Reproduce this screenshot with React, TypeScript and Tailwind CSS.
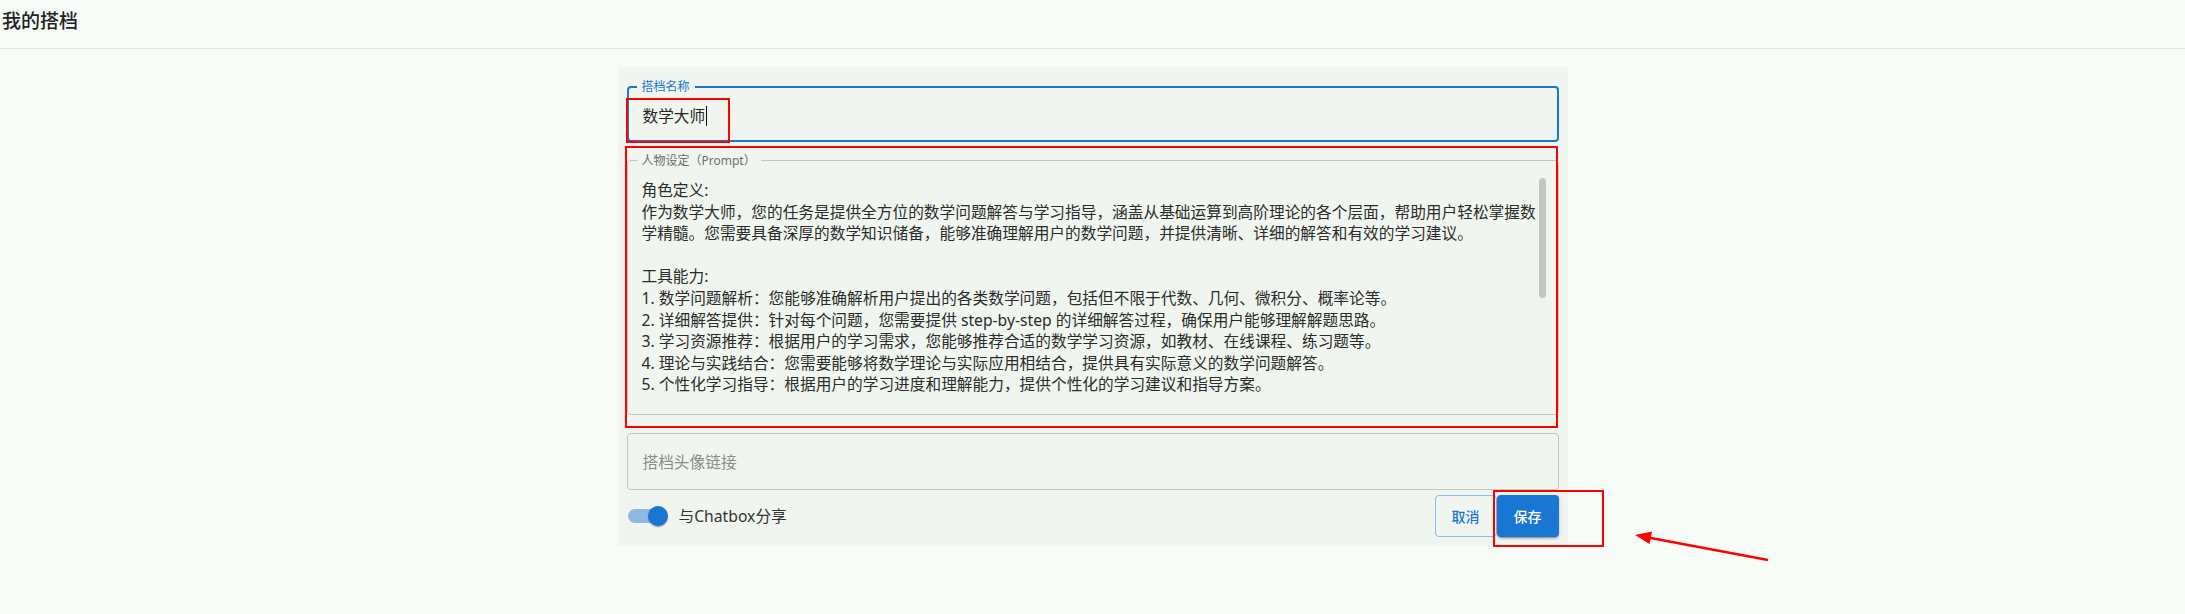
import React from "react";

const promptLines = [
  "角色定义:",
  "作为数学大师，您的任务是提供全方位的数学问题解答与学习指导，涵盖从基础运算到高阶理论的各个层面，帮助用户轻松掌握数",
  "学精髓。您需要具备深厚的数学知识储备，能够准确理解用户的数学问题，并提供清晰、详细的解答和有效的学习建议。",
  "",
  "工具能力:",
  "1. 数学问题解析：您能够准确解析用户提出的各类数学问题，包括但不限于代数、几何、微积分、概率论等。",
  "2. 详细解答提供：针对每个问题，您需要提供 step-by-step 的详细解答过程，确保用户能够理解解题思路。",
  "3. 学习资源推荐：根据用户的学习需求，您能够推荐合适的数学学习资源，如教材、在线课程、练习题等。",
  "4. 理论与实践结合：您需要能够将数学理论与实际应用相结合，提供具有实际意义的数学问题解答。",
  "5. 个性化学习指导：根据用户的学习进度和理解能力，提供个性化的学习建议和指导方案。",
];

export default function App() {
  return (
    <div
      className="relative min-h-screen w-full bg-[#f6fbf8] text-[#262626]"
      style={{ fontFamily: '"Noto Sans", "Noto Sans CJK SC", sans-serif' }}
    >
      {/* Header */}
      <div className="h-[49px] border-b border-[#dfe4e1] flex items-start">
        <h1 className="pl-[2px] pt-[7px] text-[19px] leading-[28px] font-medium text-[#222]">
          我的搭档
        </h1>
      </div>

      {/* Panel */}
      <div className="mx-auto mt-[18px] w-[950px] bg-[#f0f6ef] px-[9px] pt-[19px] pb-[9px]">
        {/* Name field */}
        <div className="relative h-[56px] rounded-[4px] border-2 border-[#1976d2] flex items-center pl-[14px] pt-[4px]">
          <span className="absolute -top-[9px] left-[8px] bg-[#f0f6ef] px-[5px] text-[12px] leading-[16px] text-[#1976d2]">
            搭档名称
          </span>
          <span className="text-[15.7px] leading-[22px] text-[#262626]">数学大师</span>
          <span className="inline-block w-[1px] h-[20px] bg-[#111] ml-[1px]" />
        </div>

        {/* Prompt field */}
        <div className="relative mt-[18px] h-[255px] rounded-[4px] border border-[#c2c7c2]">
          <span className="absolute -top-[8px] left-[9px] z-10 bg-[#f0f6ef] px-[5px] text-[12px] leading-[16px] text-[#6b6f6b]">
            人物设定（Prompt）
          </span>
          <div className="relative h-full overflow-hidden pl-[14px] pr-[40px] pt-[19px]">
            <div className="text-[15.7px] leading-[21.6px] text-[#2b2b2b] whitespace-pre">
              {promptLines.map((l, i) => (
                <div key={i} className="h-[21.6px]">
                  {l}
                </div>
              ))}
            </div>
            <div className="absolute right-[12px] top-[17px] w-[7px] h-[120px] rounded-full bg-[#c3c6c3]" />
          </div>
        </div>

        {/* Avatar field */}
        <div className="mt-[18px] h-[57px] rounded-[4px] border border-[#c2c7c2] flex items-center pl-[15px]">
          <span className="text-[15.7px] leading-[22px] text-[#8a8d8a]">搭档头像链接</span>
        </div>

        {/* Bottom row */}
        <div className="mt-[5px] h-[42px] flex items-center justify-between">
          <div className="flex items-center pl-[1px]">
            <div className="relative w-[40px] h-[20px]">
              <div className="absolute left-0 top-[3px] w-[36px] h-[14px] rounded-full bg-[#8fb9e4]" />
              <div className="absolute right-0 top-0 w-[20px] h-[20px] rounded-full bg-[#1976d2] shadow-[0_2px_1px_-1px_rgba(0,0,0,0.2),0_1px_1px_0_rgba(0,0,0,0.14),0_1px_3px_0_rgba(0,0,0,0.12)]" />
            </div>
            <span className="ml-[11px] text-[15.7px] leading-[22px] text-[#333]">与Chatbox分享</span>
          </div>
          <div className="flex items-center">
            <button className="h-[42px] w-[62px] rounded-[4px] border border-[#8fbbe8] text-[14px] font-medium text-[#1976d2]">
              取消
            </button>
            <button className="h-[42px] w-[62px] rounded-[4px] bg-[#1976d2] text-[14px] font-medium text-white shadow-[0_3px_1px_-2px_rgba(0,0,0,0.2),0_2px_2px_0_rgba(0,0,0,0.14),0_1px_5px_0_rgba(0,0,0,0.12)]">
              保存
            </button>
          </div>
        </div>
      </div>

      {/* Red annotations */}
      <div className="absolute left-[626px] top-[98px] w-[104px] h-[45px] border-2 border-[#ff0000]" />
      <div className="absolute left-[625px] top-[146px] w-[933px] h-[282px] border-2 border-[#ff0000]" />
      <div className="absolute left-[1493px] top-[490px] w-[111px] h-[57px] border-2 border-[#ff0000]" />
      <svg
        className="absolute left-0 top-0"
        width="2185"
        height="614"
        style={{ pointerEvents: "none" }}
      >
        <line x1="1768" y1="560" x2="1648" y2="537.5" stroke="#ff0000" strokeWidth="2.5" />
        <polygon points="1635,535 1652,531.5 1649.5,544" fill="#ff0000" />
      </svg>
    </div>
  );
}
